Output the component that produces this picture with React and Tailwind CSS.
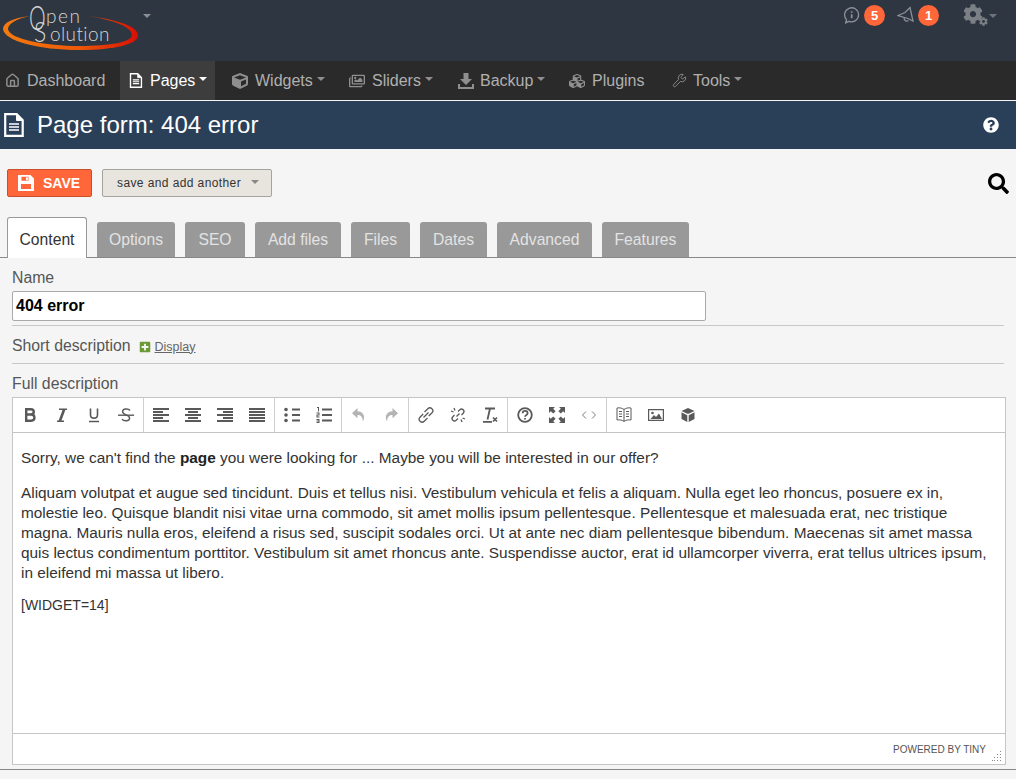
import { FaCube, FaRegImages, FaCubes, FaSearch, FaQuestionCircle, FaPlusSquare, FaCog } from "react-icons/fa";
import { House, Wrench } from "lucide-react";

const font = { fontFamily: '"Liberation Sans", Arial, sans-serif' };

/* -------------------- Small drawings -------------------- */
const Caret = ({ className = "" }) => (
  <span className={`inline-block h-0 w-0 border-x-4 border-t-4 border-x-transparent ${className}`} />
);

const PageIcon = ({ className = "" }) => (
  <svg viewBox="0 0 20 24" className={className} fill="none" stroke="currentColor">
    <path d="M1.2 1.2h11.5l6 6v15.6H1.2z" strokeWidth="2.2" />
    <path d="M12.5 1.5v6h6" fill="currentColor" strokeWidth="1" />
    <path d="M5 11h10M5 14h10M5 17h10" strokeWidth="1.7" />
  </svg>
);

const BackupIcon = () => (
  <svg viewBox="0 0 16 16" className="h-[16px] w-[16px]" fill="currentColor">
    <path d="M5.500 0h5v6H14L8 12 2 6h3.500z" />
    <path d="M0 11h2v3h12v-3h2v5H0z" />
  </svg>
);

const BubbleIcon = () => (
  <svg viewBox="0 0 17 17" className="h-[17px] w-[17px]" fill="none" stroke="currentColor" strokeWidth="1.300">
    <path d="M2.700 15.800 3.500 12.600A7 7 0 1 1 6 14.300z" />
    <path d="M8.700 7.200v4M8.700 4.300v1.500" strokeWidth="1.800" />
  </svg>
);

const BellIcon = () => (
  <svg viewBox="0 0 18 18" className="h-[18px] w-[18px]" fill="none" stroke="currentColor" strokeWidth="1.300">
    <path d="M1 9.500 8 6.500 13 1.500 16 15 11 12.500z" />
    <path d="M7 11.500c0 3 2.500 4.500 4.500 3" />
  </svg>
);

const SaveIcon = () => (
  <svg viewBox="0 0 16 16" className="h-[16px] w-[16px]" fill="white">
    <path
      fillRule="evenodd"
      d="M0 0h12.500L16 3.500V16H0zM3.500 1.800v4h7v-4zM3 9v5h10V9z"
    />
    <rect x="8" y="2.300" width="1.800" height="3" />
  </svg>
);

function Logo() {
  return (
    <div className="relative h-[54px] w-[140px] shrink-0" style={{ fontFamily: "Lato, sans-serif" }}>
      <svg viewBox="0 0 140 54" className="absolute inset-0 h-full w-full">
        <defs>
          <linearGradient id="swoosh" x1="0" x2="1" y1="0" y2="0">
            <stop offset="0" stopColor="#f47a10" />
            <stop offset="0.55" stopColor="#ee5a08" />
            <stop offset="1" stopColor="#d80f05" />
          </linearGradient>
        </defs>
        <path
          d="M30 16C12 18 3 23 3 29c1 12 36 21 76 21 36 0 60-6 59-15C137 25 113 19 87 16c22 3 45 10 45 19 0 7-22 11-52 11C45 46 9 39 8 29c0-5 8-10 22-13z"
          fill="url(#swoosh)"
        />
      </svg>
      <span className="absolute left-[29px] top-0 text-[34px] leading-none font-light text-[#d5d5d5]">
        <span className="inline-block origin-left scale-x-[.62]">O</span>
      </span>
      <span className="absolute left-[46px] top-[6px] text-[19px] leading-none font-light tracking-[1.5px] text-[#d5d5d5]">
        pen
      </span>
      <span className="absolute left-[34px] top-[18px] text-[27px] leading-none font-light text-[#d5d5d5]">
        <span className="inline-block origin-left scale-x-[.85]">S</span>
      </span>
      <span className="absolute left-[50px] top-[24px] text-[19px] leading-none font-light tracking-[.4px] text-[#d5d5d5]">
        olution
      </span>
    </div>
  );
}

/* -------------------- Top -------------------- */
function Badge({ children }) {
  return (
    <span className="flex h-[21px] w-[21px] items-center justify-center rounded-full bg-[#ff6639] text-[13px] font-bold text-white">
      {children}
    </span>
  );
}

function TopBar() {
  return (
    <div className="flex h-[61px] items-start bg-[#2e3641]">
      <Logo />
      <Caret className="mt-[14px] ml-[3px] border-t-[#8a8f96]" />
      <div className="ml-auto mt-[5px] flex items-center text-[#8b9097]">
        <BubbleIcon />
        <span className="ml-[4px]"><Badge>5</Badge></span>
        <span className="ml-[12px] mt-[-2px]"><BellIcon /></span>
        <span className="ml-[3px]"><Badge>1</Badge></span>
        <FaCog size={20} className="ml-[24px] mt-[-3px] text-[#7b8087]" />
        <FaCog size={9} className="mt-[12px] ml-[-4px] text-[#7b8087]" />
        <Caret className="ml-[1px] mr-[19px] border-t-[#6f747b]" />
      </div>
    </div>
  );
}

const navItems = [
  { label: "Dashboard", icon: <House size={15} strokeWidth={2.4} />, w: "w-[120px]", pad: "pl-[4px]" },
  { label: "Pages", icon: <PageIcon className="h-[15px] w-[14px]" />, caret: true, active: true, w: "w-[95px]", pad: "pl-[8px]", gap: "mr-[6px]" },
  { label: "Widgets", icon: <FaCube size={16} />, caret: true, w: "w-[134px]", pad: "pl-[17px]" },
  { label: "Sliders", icon: <FaRegImages size={16} />, caret: true, w: "w-[109px]" },
  { label: "Backup", icon: <BackupIcon />, caret: true, w: "w-[111px]", gap: "mr-[6px]" },
  { label: "Plugins", icon: <FaCubes size={16} />, w: "w-[102px]" },
  { label: "Tools", icon: <Wrench size={15} strokeWidth={1.5} />, caret: true, w: "w-[80px]", gap: "mr-[6px]" },
];

function Nav() {
  return (
    <div className="flex h-[39px] bg-[#2a2a2a] text-[16px]">
      {navItems.map(({ label, icon, caret, active, w, pad, gap }) => (
        <div
          key={label}
          className={`flex h-full items-center ${w} ${pad || ""} ${active ? "bg-[#3d3d3d] text-white" : "text-[#b0b0b0]"}`}
        >
          <span className={`${gap || "mr-[7px]"} flex w-[16px] justify-center ${active ? "text-white" : "text-[#8f8f8f]"}`}>
            {icon}
          </span>
          <span>{label}</span>
          {caret && (
            <Caret className={`mb-[3px] ml-[4px] ${active ? "border-t-white" : "border-t-[#8f8f8f]"}`} />
          )}
        </div>
      ))}
    </div>
  );
}

function TitleBar() {
  return (
    <div className="mt-px flex h-[48px] items-center bg-[#2a4059] pl-[4px] pr-[17px] text-white">
      <PageIcon className="h-[24px] w-[20px]" />
      <h1 className="ml-[13px] text-[24px] leading-none">Page form: 404 error</h1>
      <FaQuestionCircle size={16} className="ml-auto" />
    </div>
  );
}

/* -------------------- Actions and tabs -------------------- */
function Actions() {
  return (
    <div className="flex items-center pt-[20px] pl-[7px] pr-[7px]">
      <button className="flex h-[28px] w-[85px] items-center rounded-[2px] border border-[#c8502c] bg-[#ff6639] pl-[10px] text-[14px] font-bold text-white">
        <SaveIcon />
        <span className="ml-[9px]">SAVE</span>
      </button>
      <button className="ml-[10px] flex h-[28px] w-[170px] items-center rounded-[2px] border border-[#a5a39e] bg-[#e8e4de] pl-[14px] text-[12px] tracking-[0.4px] text-[#333]">
        save and add another
        <Caret className="ml-[10px] mb-[2px] border-t-[#888]" />
      </button>
      <FaSearch size={21} className="ml-auto text-black" />
    </div>
  );
}

const tabs = [
  ["Options", "w-[78px]"],
  ["SEO", "w-[60px]"],
  ["Add files", "w-[86px]"],
  ["Files", "w-[59px]"],
  ["Dates", "w-[67px]"],
  ["Advanced", "w-[95px]"],
  ["Features", "w-[87px]"],
];

function Tabs() {
  return (
    <div className="mt-[20px] flex h-[41px] items-end gap-[10px] border-b border-[#888] pl-[7px] text-[15.700px]">
      <div className="-mb-px flex h-[41px] w-[80px] items-center justify-center rounded-t-[3px] border border-b-0 border-[#999] bg-white pt-[3px] text-[#333]">
        Content
      </div>
      {tabs.map(([label, w]) => (
        <div
          key={label}
          className={`flex h-[35px] ${w} items-center justify-center rounded-t-[3px] bg-[#999] text-[#e3e3e3]`}
        >
          {label}
        </div>
      ))}
    </div>
  );
}

/* -------------------- Editor toolbar icons -------------------- */
const Lines = ({ rows }) => (
  <svg viewBox="0 0 16 16" className="h-[16px] w-[16px]" fill="#595959">
    {rows.map(([x, w], i) => (
      <rect key={i} x={x} y={1 + i * 3} width={w} height="2" />
    ))}
  </svg>
);

const I = ({ children, fill = "#595959", stroke = "none", sw = 1.5 }) => (
  <svg viewBox="0 0 16 16" className="h-[16px] w-[16px]" fill={fill} stroke={stroke} strokeWidth={sw}>
    {children}
  </svg>
);

const toolGroups = [
  [
    <I key="b" fill="none" stroke="#595959" sw={2.4}><path d="M4.200 2.200h4.600c4 0 4 5.300 0 5.300H4.200m0 0h5c4.300 0 4.300 6.200 0 6.200h-5zM4.200 1v13.800" /></I>,
    <I key="i" stroke="#595959" fill="none" sw={1.4}><path d="M5 2.200h8M3 14.200h7" /><path d="M10.200 2.200 5.800 14.200" strokeWidth="2.600" /></I>,
    <I key="u" fill="none" stroke="#595959" sw={1.600}><path d="M4.500 1.500v6.200c0 4.600 7 4.600 7 0V1.500M3 14.500h10" /></I>,
    <I key="s" fill="none" stroke="#595959" sw={1.400}><path d="M12 3.500C10.500 1.200 4.600 1.400 4.600 4.600c0 4 7 2.500 7 6.600 0 3.200-6 3.300-7.600 1" /><path d="M0 8.200h16" /></I>,
  ],
  [
    <Lines key="l" rows={[[0, 16], [0, 10], [0, 16], [0, 10], [0, 16]]} />,
    <Lines key="c" rows={[[0, 16], [3, 10], [0, 16], [3, 10], [0, 16]]} />,
    <Lines key="r" rows={[[0, 16], [6, 10], [0, 16], [6, 10], [0, 16]]} />,
    <Lines key="j" rows={[[0, 16], [0, 16], [0, 16], [0, 16], [0, 16]]} />,
  ],
  [
    <I key="ul"><circle cx="2" cy="2.500" r="1.800" /><circle cx="2" cy="8" r="1.800" /><circle cx="2" cy="13.500" r="1.800" /><rect x="8" y="1.500" width="8" height="2" /><rect x="8" y="7" width="8" height="2" /><rect x="8" y="12.500" width="8" height="2" /></I>,
    <I key="ol"><path d="M1 0h2v4.500H2V1H1zM.5 5.500h3v3H1.500v1h2v1h-3v-3h2v-1h-2zM.5 12h3v4h-3v-1h2v-.5h-2v-1h2V13h-2z" /><rect x="6" y="1.500" width="10" height="2" /><rect x="6" y="7" width="10" height="2" /><rect x="6" y="12.500" width="10" height="2" /></I>,
  ],
  [
    <I key="undo" fill="#b4b4b4"><path d="M6.500 1 1 6.200l5.500 5V8c3.200 0 5 1.500 5.500 6.500C15 8.500 11.500 4.500 6.500 4.300z" /></I>,
    <I key="redo" fill="#b4b4b4"><path d="M9.500 1 15 6.200l-5.500 5V8c-3.200 0-5 1.500-5.500 6.500C1 8.500 4.500 4.500 9.500 4.300z" /></I>,
  ],
  [
    <I key="link" fill="none" stroke="#595959" sw={1.300}><path d="M6.500 5 9.800 1.800a2.300 2.300 0 0 1 4.200 4L10.800 9M9.500 11 6.200 14.200a2.300 2.300 0 0 1-4.200-4L5.200 7M5.500 10.500l5-5" /></I>,
    <I key="unlink" fill="none" stroke="#595959" sw={1.300}><path d="M8 4.500 9.800 2.800a2.200 2.200 0 0 1 3.400 3.400L11.500 8M8 11.500l-1.800 1.700a2.200 2.200 0 0 1-3.400-3.400L4.500 8M6.500 9.500l3-3M4 1l1 2.500M1 4l2.500 1M12 15l-1-2.500M15 12l-2.500-1" /></I>,
    <I key="clear" fill="none" stroke="#595959" sw={1.300}><path d="M3 1.500h10M8 1.500 5.500 12.500M1 14.800h9" strokeWidth="1.800" /><path d="m11 10.500 4 4m0-4-4 4" strokeWidth="1.600" /></I>,
  ],
  [
    <I key="help" fill="none" stroke="#595959" sw={1.800}><circle cx="8" cy="8" r="6.800" /><path d="M5.600 6.200c.2-3 5-3 5 0 0 1.800-2.500 1.600-2.500 3.600M8 11v1.600" /></I>,
    <I key="full"><path d="M0 0h6L4.200 1.800l2.400 2.400-2.400 2.400-2.400-2.400L0 6zM16 0v6l-1.800-1.800-2.400 2.400-2.400-2.400 2.400-2.400L10 0zM0 16v-6l1.800 1.800 2.400-2.400 2.400 2.400-2.400 2.400L6 16zM16 16h-6l1.800-1.800-2.400-2.400 2.400-2.400 2.400 2.400L16 10z" /></I>,
    <I key="code" fill="none" stroke="#595959" sw={.8}><path d="M5 4.500 1.500 8 5 11.500M11 4.500 14.500 8 11 11.500" /></I>,
  ],
  [
    <I key="book" fill="none" stroke="#595959" sw={1}><path d="M8 2.500C6.500 1 3 .5 1 1v12c2-.5 5.500 0 7 1.500 1.500-1.500 5-2 7-1.500V1c-2-.5-5.500 0-7 1.500zM8 2.500v12M3 4.500h3M3 7h3M3 9.500h3M10 4.500h3M10 7h3M10 9.500h3" /></I>,
    <I key="img"><path fillRule="evenodd" d="M0 2h16v12H0zM1.200 3.200v9.600h13.600V3.200z" /><circle cx="4.500" cy="6" r="1.300" /><path d="M2.500 12 6 8l2 2 3-3.500 3 5.500z" /></I>,
    <I key="cube"><path d="M8 1 14.500 4 8 7 1.500 4zM1.500 5.200 7.300 8.300V15L1.500 12zM14.500 5.200 8.700 8.300V15l5.800-3z" /></I>,
  ],
];

function Toolbar() {
  return (
    <div className="flex h-[35px] border-b border-[#c5c5c5]">
      {toolGroups.map((group, i) => (
        <div key={i} className="flex items-center gap-[16px] border-r border-[#d0d0d0] px-[9px] last:border-r-0">
          {group}
        </div>
      ))}
    </div>
  );
}

/* -------------------- Page -------------------- */
function Editor() {
  return (
    <div className="mt-[4px] h-[368px] w-[994px] border border-[#c5c5c5] bg-white">
      <Toolbar />
      <div className="h-[300px] px-[8px] pt-[15px] text-[#333] text-[15.360px] leading-[20px]">
        <p>
          Sorry, we can't find the <strong className="text-[#222]">page</strong> you were looking for ... Maybe you will be interested in our offer?
        </p>
        <p className="mt-[15px]">
          Aliquam volutpat et augue sed tincidunt. Duis et tellus nisi. Vestibulum vehicula et felis a aliquam. Nulla eget leo rhoncus, posuere ex in, molestie leo. Quisque blandit nisi vitae urna commodo, sit amet mollis ipsum pellentesque. Pellentesque et malesuada erat, nec tristique magna. Mauris nulla eros, eleifend a risus sed, suscipit sodales orci. Ut at ante nec diam pellentesque bibendum. Maecenas sit amet massa quis lectus condimentum porttitor. Vestibulum sit amet rhoncus ante. Suspendisse auctor, erat id ullamcorper viverra, erat tellus ultrices ipsum, in eleifend mi massa ut libero.
        </p>
        <p className="mt-[12px] text-[14px]">[WIDGET=14]</p>
      </div>
      <div className="relative flex h-[31px] items-center justify-end border-t border-[#c5c5c5] pr-[19px] text-[10px] text-[#555]">
        POWERED BY TINY
        <svg viewBox="0 0 10 10" className="absolute right-[3px] bottom-[3px] h-[10px] w-[10px]" fill="#888">
          <rect x="8" y="0" width="1" height="1" />
          <rect x="8" y="3" width="1" height="1" /><rect x="5" y="3" width="1" height="1" />
          <rect x="8" y="6" width="1" height="1" /><rect x="5" y="6" width="1" height="1" /><rect x="2" y="6" width="1" height="1" />
          <rect x="8" y="9" width="1" height="1" /><rect x="5" y="9" width="1" height="1" /><rect x="2" y="9" width="1" height="1" /><rect x="0" y="9" width="1" height="1" />
        </svg>
      </div>
    </div>
  );
}

function Form() {
  return (
    <div className="px-[12px] text-[15.800px] text-[#555]">
      <div className="mt-[11px] h-[18px] leading-[18px]">Name</div>
      <input
        readOnly
        value="404 error"
        className="mt-[4px] block h-[30px] w-[694px] rounded-[2px] border border-[#aaa] bg-white px-[3px] text-[16px] font-bold text-black"
      />
      <div className="mt-[4px] w-[992px] border-t border-[#c8c8c8]" />
      <div className="mt-[11px] flex h-[18px] items-center leading-[18px]">
        Short description
        <FaPlusSquare size={12} className="ml-[8px] mt-[2px] text-[#6b9a35]" />
        <span className="ml-[4px] mt-[1px] text-[12.500px] text-[#666] underline">Display</span>
      </div>
      <div className="mt-[8px] w-[992px] border-t border-[#c8c8c8]" />
      <div className="mt-[11px] h-[18px] leading-[18px]">Full description</div>
      <Editor />
    </div>
  );
}

export default function App() {
  return (
    <div style={font} className="h-[779px] w-[1016px] overflow-hidden bg-[#f5f5f5]">
      <TopBar />
      <Nav />
      <TitleBar />
      <Actions />
      <Tabs />
      <Form />
      <div className="mt-[4px] border-t border-[#888]" />
    </div>
  );
}
